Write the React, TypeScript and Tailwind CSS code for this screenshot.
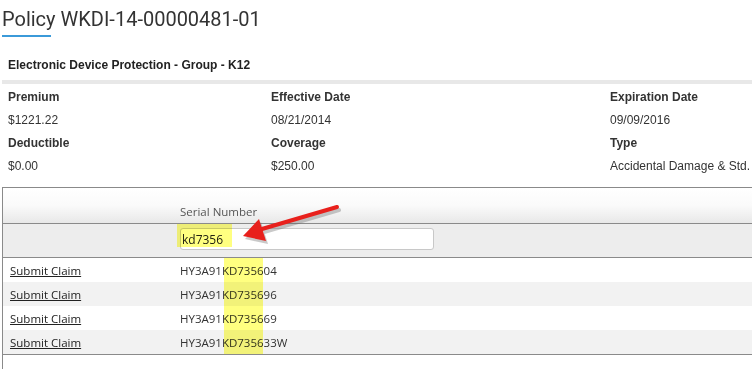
import { useState } from 'react';

const rows = ['HY3A91KD735604', 'HY3A91KD735696', 'HY3A91KD735669', 'HY3A91KD735633W'];

const details = [
  [
    { label: 'Premium', value: '$1221.22' },
    { label: 'Deductible', value: '$0.00' },
  ],
  [
    { label: 'Effective Date', value: '08/21/2014' },
    { label: 'Coverage', value: '$250.00' },
  ],
  [
    { label: 'Expiration Date', value: '09/09/2016' },
    { label: 'Type', value: 'Accidental Damage & Std.' },
  ],
];

export default function App() {
  const [filter, setFilter] = useState('kd7356');

  return (
    <div className="relative h-[369px] w-[752px] overflow-hidden bg-white text-[#333]">
      <div className="w-[820px] pl-[2px]">
        {/* Titel */}
        <h1 className="mt-[5px] font-['Roboto',sans-serif] text-[20px] leading-[28px] text-[#333]">
          Policy WKDI-14-00000481-01
        </h1>
        <div className="mt-[2px] h-[2px] w-[49px] bg-[#3b9ad9]" />

        <div className="mt-[17px] pl-[6px] font-['Liberation_Sans',Arial,sans-serif] text-[12px] font-bold leading-[22px] text-[#222]">
          Electronic Device Protection - Group - K12
        </div>
        <div className="mt-[4px] h-[4px] bg-[#e8e8e8]" />

        {/* Policendaten */}
        <div className="mt-[2px] grid grid-cols-[263px_339px_1fr] pl-[6px] font-['Liberation_Sans',Arial,sans-serif] text-[12px] leading-[23px]">
          {details.map((col, i) => (
            <div key={i} className="whitespace-nowrap">
              {col.map((d) => (
                <div key={d.label}>
                  <div className="font-bold text-[#333]">{d.label}</div>
                  <div className="text-[#333]">{d.value}</div>
                </div>
              ))}
            </div>
          ))}
        </div>

        {/* Geräte-Tabelle */}
        <div className="mt-[9px] h-[200px] border-l border-[#8a8a8a] font-['Open_Sans','Noto_Sans',sans-serif] text-[11.5px]">
          <div className="border-y border-[#8a8a8a]">
            <div className="grid h-[35px] grid-cols-[170px_1fr] bg-gradient-to-b from-white via-[#fafafa] to-[#e8e8e8]">
              <div />
              <div className="flex items-end pb-[3px] pl-[7px] leading-[16px] text-[#555]">Serial Number</div>
            </div>
            <div className="grid h-[34px] grid-cols-[170px_1fr] border-t border-[#8a8a8a] bg-[#ededed]">
              <div />
              <div className="pl-[7px] pt-[4px]">
                <input
                  value={filter}
                  onChange={(e) => setFilter(e.target.value)}
                  className="h-[22px] w-[254px] rounded-[3px] border border-[#c8c8c8] bg-white px-[1px] text-[12px] text-[#222] outline-none"
                />
              </div>
            </div>
          </div>
          <div className="border-b border-[#8a8a8a]">
            {rows.map((serial, i) => (
              <div
                key={serial}
                className={`grid h-[24px] grid-cols-[170px_1fr] items-center pt-[1px] ${i % 2 === 1 ? 'bg-[#f2f2f2]' : 'bg-white'}`}
              >
                <a href="#" className="pl-[7px] text-[#222] underline">
                  Submit Claim
                </a>
                <div className="pl-[7px] text-[#333]">{serial}</div>
              </div>
            ))}
          </div>
        </div>
      </div>

      {/* Markierungen aus dem Screenshot */}
      <div className="pointer-events-none absolute left-[177px] top-[224px] h-[23px] w-[55px] bg-[#ffff80] mix-blend-multiply" />
      <div className="pointer-events-none absolute left-[224px] top-[258px] h-[96px] w-[39px] bg-[#ffff80] mix-blend-multiply" />
      <svg className="pointer-events-none absolute left-0 top-0" width="752" height="369" aria-hidden="true">
        <g opacity="0.35" transform="translate(2 3)">
          <path d="M337 207 L262 229" stroke="#666" strokeWidth="4" strokeLinecap="round" />
          <path d="M243 236 L259 219 L266 241 Z" fill="#666" />
        </g>
        <path d="M337 207 L262 229" stroke="#e8201c" strokeWidth="4" strokeLinecap="round" />
        <path d="M243 236 L259 219 L266 241 Z" fill="#e8201c" />
      </svg>
    </div>
  );
}
